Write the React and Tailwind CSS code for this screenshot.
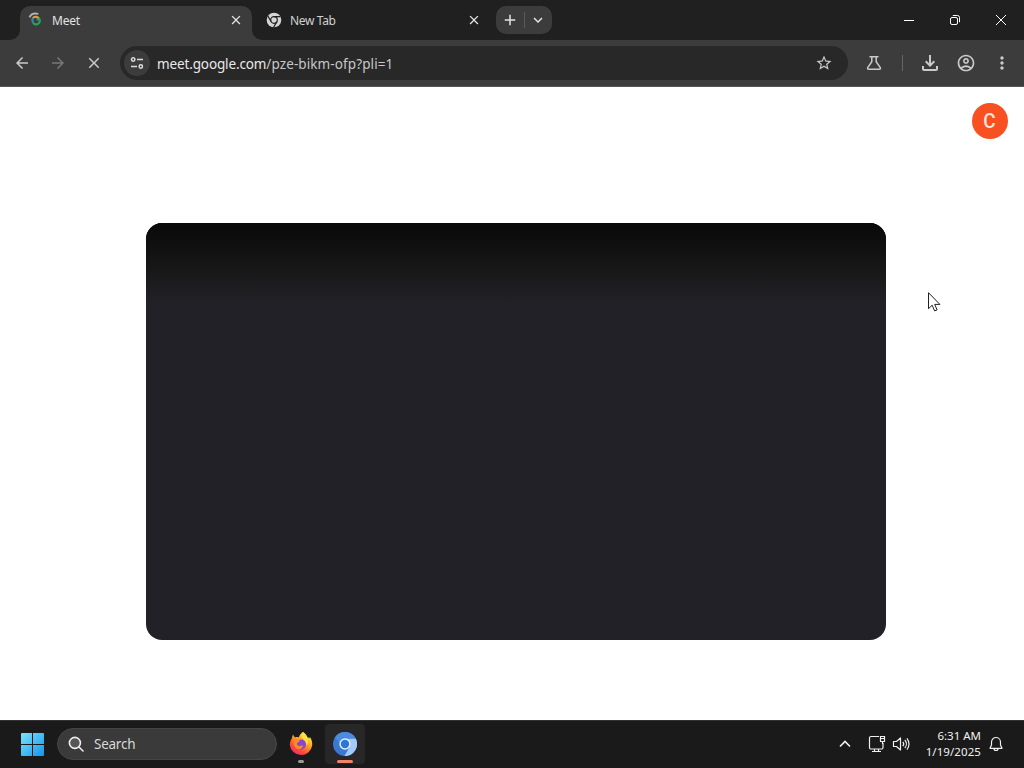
import {
  MdAdd,
  MdArrowBack,
  MdArrowForward,
  MdClose,
  MdKeyboardArrowDown,
  MdMoreVert,
  MdOutlineAccountCircle,
  MdOutlineFileDownload,
  MdStarBorder
} from 'react-icons/md';

const url = { host: 'meet.google.com', path: '/pze-bikm-ofp?pli=1' };

export default function App() {
  return (
    <div className="relative flex h-screen w-screen flex-col overflow-hidden bg-white font-['Noto_Sans','Open_Sans',sans-serif]">
      <TabStrip />
      <Toolbar />
      <MeetPage />
      <Taskbar />
      <Cursor />
    </div>
  );
}

function TabStrip() {
  return (
    <div className="flex h-10 shrink-0 bg-[#202020] pl-5 text-[#e3e3e3]">
      <div className="relative mt-1.5 flex w-[232px] items-center rounded-t-[10px] bg-[#3c3c3c] pr-2 pb-1.5 pl-2">
        <TabFlare className="absolute bottom-0 -left-2.5" />
        <TabFlare className="absolute -right-2.5 bottom-0 -scale-x-100" />
        <LoadingFavicon />
        <span className="mt-px ml-2 flex-1 text-[12px] leading-4 tracking-[-0.25px]">Meet</span>
        <MdClose className="h-4 w-4 p-[0.5px]" />
      </div>
      <div className="mt-1.5 flex w-[238px] items-center pr-2 pb-1.5 pl-3.5">
        <ChromeMono />
        <span className="mt-px ml-2 flex-1 text-[12px] leading-4 tracking-[-0.35px] text-[#d0d0d0]">New Tab</span>
        <MdClose className="h-4 w-4 p-[0.5px]" />
      </div>
      <div className="mt-1.5 ml-1.5 flex h-7 w-14 items-center rounded-[10px] bg-[#3c3c3c]">
        <div className="flex flex-1 justify-center">
          <MdAdd className="h-[18px] w-[18px]" />
        </div>
        <div className="h-4 w-px bg-[#5a5a5a]" />
        <div className="flex flex-1 justify-center">
          <MdKeyboardArrowDown className="h-[18px] w-[18px]" />
        </div>
      </div>
      <div className="ml-auto flex text-white">
        <WindowButton>
          <path d="M1 6.5h10" />
        </WindowButton>
        <WindowButton>
          <rect x="1.5" y="3.5" width="7" height="7" rx="1.5" />
          <path d="M3.8 1.5h4.7a2 2 0 0 1 2 2v4.7" />
        </WindowButton>
        <WindowButton>
          <path d="M1 1l10 10M11 1L1 11" />
        </WindowButton>
      </div>
    </div>
  );
}

function WindowButton({ children }) {
  return (
    <div className="flex w-[46px] items-center justify-center">
      <svg viewBox="0 0 12 12" className="h-3 w-3" fill="none" stroke="currentColor">
        {children}
      </svg>
    </div>
  );
}

function TabFlare({ className }) {
  return (
    <svg viewBox="0 0 10 10" className={`h-2.5 w-2.5 ${className}`}>
      <path d="M10 0v10H0A10 10 0 0 0 10 0z" fill="#3c3c3c" />
    </svg>
  );
}

function Toolbar() {
  return (
    <div className="flex h-[47px] shrink-0 items-center border-b border-[#555] bg-[#3c3c3c] pl-2 text-[#cacaca]">
      <div className="flex gap-2">
        <ToolButton><MdArrowBack className="h-[18px] w-[18px]" /></ToolButton>
        <ToolButton><MdArrowForward className="h-[18px] w-[18px] text-[#777]" /></ToolButton>
        <ToolButton><MdClose className="h-[18px] w-[18px]" /></ToolButton>
      </div>
      <div className="ml-3 flex h-[34px] w-[728px] items-center rounded-full bg-[#282828] pr-[15px] pl-1">
        <div className="flex h-[26px] w-[26px] items-center justify-center rounded-full bg-[#3c3c3c]">
          <svg viewBox="0 0 14 14" className="h-3.5 w-3.5" fill="none" stroke="#dcdcdc" strokeWidth="1.5">
            <circle cx="3.2" cy="3.5" r="1.7" />
            <path d="M7 3.5h6M1 10.5h6" />
            <circle cx="10.8" cy="10.5" r="1.7" />
          </svg>
        </div>
        <p className="mt-px ml-[7px] flex-1 text-[13.5px] leading-5 whitespace-nowrap text-[#c7c7c7]">
          <span className="tracking-[-0.13px] text-[#e8e8e8]">{url.host}</span>
          <span className="tracking-[0.1px]">{url.path}</span>
        </p>
        <MdStarBorder className="h-[18px] w-[18px]" />
      </div>
      <div className="ml-3 flex items-center">
        <ToolButton>
          <svg viewBox="0 0 16 16" className="h-4 w-4" fill="none" stroke="currentColor" strokeWidth="1.5">
            <path d="M3.5 1.700h9M5.800 1.700v5L1.700 12.600a1.100 1.100 0 0 0 .9 1.700h10.800a1.100 1.100 0 0 0 .9-1.700L10.200 6.700v-5" />
          </svg>
        </ToolButton>
        <div className="mx-3.5 h-4 w-px bg-[#656565]" />
        <div className="-ml-px flex gap-2">
          <ToolButton><MdOutlineFileDownload className="h-6 w-6" /></ToolButton>
          <ToolButton><MdOutlineAccountCircle className="h-5 w-5" /></ToolButton>
          <ToolButton><MdMoreVert className="h-5 w-5" /></ToolButton>
        </div>
      </div>
    </div>
  );
}

function ToolButton({ children }) {
  return <div className="flex h-7 w-7 items-center justify-center">{children}</div>;
}

function MeetPage() {
  return (
    <main className="flex min-h-0 flex-1 flex-col bg-white">
      <div className="flex justify-end px-4 pt-4">
        <div className="flex h-9 w-9 items-center justify-center rounded-full bg-[#f85020] font-['Roboto',sans-serif] text-[20px] text-[#ffe4da]">
          <span className="scale-x-95 font-medium">C</span>
        </div>
      </div>
      <div className="mt-[84px] ml-[146px] h-[417px] w-[740px] overflow-hidden rounded-2xl bg-[#222127]">
        <div className="h-[80px] bg-linear-to-b from-[#090909] via-[#181818] via-60% to-[#222127]" />
      </div>
    </main>
  );
}

function Taskbar() {
  return (
    <footer className="flex h-12 shrink-0 items-center border-t border-[#333] bg-[#1a1a1a] pb-px text-[#f0f0f0]">
      <WindowsLogo />
      <div className="ml-[13px] flex h-8 w-[220px] items-center rounded-full border border-[#454545] bg-[#3a3a3a] pl-2.5">
        <svg viewBox="0 0 16 16" className="h-4 w-4" fill="none" stroke="#eee" strokeWidth="1.6">
          <circle cx="6.9" cy="6.9" r="5.5" fill="#555" />
          <path d="M11 11l4 4" strokeLinecap="round" />
        </svg>
        <span className="mt-px ml-[10px] text-[13.5px] tracking-[-0.25px] text-[#d8d8d8]">Search</span>
      </div>
      <div className="ml-1 flex items-center gap-1">
        <div className="flex h-10 w-10 flex-col items-center pt-2">
          <Firefox />
          <div className="mt-1 h-[3px] w-1.5 rounded-full bg-[#9a9a9a]" />
        </div>
        <div className="flex h-10 w-10 flex-col items-center rounded bg-[#272727] pt-2">
          <Chromium />
          <div className="mt-1 h-[3px] w-4 rounded-full bg-[#f4826b]" />
        </div>
      </div>
      <div className="ml-auto flex items-center pr-[21px]">
        <svg viewBox="0 0 12 12" className="h-3 w-3" fill="none" stroke="currentColor" strokeWidth="1.6">
          <path d="M1 8.5l5-5 5 5" />
        </svg>
        <svg viewBox="0 0 18 18" className="ml-[17px] h-[18px] w-[18px]" fill="none" stroke="currentColor" strokeWidth="1.2">
          <path d="M11 1.500H3A1.500 1.500 0 0 0 1.500 3v9.500A1.500 1.500 0 0 0 3 14h10.500a1.500 1.500 0 0 0 1.500-1.500V8" />
          <path d="M6.500 14v2.500M10.500 14v2.500M4 16.500h9M12.500 1.500h4v5h-4zM12.500 3.500h4M14.500 6.500v2.500" />
        </svg>
        <svg viewBox="0 0 18 18" className="ml-1.5 h-[18px] w-[18px]" fill="none" stroke="currentColor" strokeWidth="1.2">
          <path d="M1.500 6.500h3L8.500 3v12l-4-3.500h-3z" strokeLinejoin="round" />
          <path d="M10.800 6.800a3.400 3.400 0 0 1 0 4.400M12.800 5a6 6 0 0 1 0 8M14.900 3.300a8.800 8.800 0 0 1 0 11.400" />
        </svg>
        <div className="ml-3.5 flex w-[57px] flex-col items-end text-[11.5px] leading-4 whitespace-nowrap">
          <p>6:31 AM</p>
          <p className="tracking-[0.08px]">1/19/2025</p>
        </div>
        <svg viewBox="0 0 14 16" className="ml-2 h-4 w-3.5" fill="none" stroke="currentColor" strokeWidth="1.2">
          <path d="M7 1.500a4.500 4.500 0 0 0-4.500 4.500v3L1 12.300h12L11.500 9V6A4.500 4.500 0 0 0 7 1.500z" strokeLinejoin="round" />
          <path d="M5 12.500a2 2 0 0 0 4 0" />
        </svg>
      </div>
    </footer>
  );
}

function WindowsLogo() {
  return (
    <svg viewBox="0 0 23 23" className="ml-[21px] h-[23px] w-[23px]">
      <defs>
        <linearGradient id="win" x1="0" y1="0" x2="23" y2="23" gradientUnits="userSpaceOnUse">
          <stop stopColor="#7be3fa" />
          <stop offset="1" stopColor="#1494ed" />
        </linearGradient>
      </defs>
      <path d="M0 1a1 1 0 0 1 1-1h10v11H0zM12 0h10a1 1 0 0 1 1 1v10H12zM0 12h11v11H1a1 1 0 0 1-1-1zM12 12h11v10a1 1 0 0 1-1 1H12z" fill="url(#win)" />
    </svg>
  );
}

function LoadingFavicon() {
  return (
    <svg viewBox="0 0 16 16" className="h-4 w-4" fill="none">
      <path d="M1.500 5.300C3 2 6.500.8 10.300 1.900" stroke="#aeb4b4" strokeWidth="1.900" />
      <path d="M4.900 6.200A3.600 3.600 0 0 1 11 6.700" stroke="#e5a52e" strokeWidth="2.200" />
      <path d="M4.900 6.200a3.600 3.600 0 0 0 0 4" stroke="#3d80d7" strokeWidth="2.200" />
      <path d="M4.900 10.200A3.600 3.600 0 0 0 11.500 7.300H8.500" stroke="#27a35b" strokeWidth="2.200" />
    </svg>
  );
}

function ChromeMono() {
  return (
    <svg viewBox="0 0 16 16" className="h-4 w-4">
      <circle cx="8" cy="8" r="7.300" fill="#d5d5d5" />
      <g fill="none" stroke="#202020" strokeWidth="1.200">
        <circle cx="8" cy="8" r="3.300" />
        <path d="M8 4.700h6.500M5.140 9.650L1.900 4M10.860 9.650L7.600 15.300" />
      </g>
    </svg>
  );
}

function Firefox() {
  return (
    <svg viewBox="0 0 24 24" className="h-6 w-6">
      <defs>
        <linearGradient id="fox" x1="19" y1="2" x2="5" y2="23" gradientUnits="userSpaceOnUse">
          <stop stopColor="#fff04a" />
          <stop offset=".4" stopColor="#ff9a22" />
          <stop offset=".7" stopColor="#ff4b38" />
          <stop offset="1" stopColor="#e82779" />
        </linearGradient>
      </defs>
      <path d="M14 0c3 2 4 4 4.600 5.500 1-.3 1.400.2 1.800 1 .5-.7.400-1.400.300-2 2 3 2.800 6 2.500 9A11.300 11.300 0 0 1 .8 13c0-3 1-5 2.200-7 .1-1.600.5-2.600 1.200-3.500.4 1.500 1 2.200 2 2.900 1.200-.4 2.400-.4 3.600 0C10.500 3 12 1.200 14 0z" fill="url(#fox)" />
      <circle cx="12" cy="12.500" r="5" fill="#8547d2" />
      <path d="M4.500 8c2.200-1.600 4.700-1.200 6.500.5-.5 1.500-2.300 1.400-3 2.700-.5 1.300.7 2.700 2.500 2.800 1.400 0 2.300-.8 3.600-.1-.7 2.300-3.100 3.600-5.400 3-3-.8-4.800-4.900-4.200-8.900z" fill="#ff8a23" />
      <path d="M14 0c-2 3-1.200 5.500 1 7.500 1.700 1.500 2.700 3.500 2.300 6 2.200-2 2-5 1-7.500C17.500 3.500 16 1.500 14 0z" fill="#ffe23d" />
    </svg>
  );
}

function Chromium() {
  return (
    <svg viewBox="0 0 24 24" className="h-6 w-6">
      <circle cx="12" cy="12" r="12" fill="#3978d3" />
      <path d="M12 6.500h10.700A12 12 0 0 1 11.400 24l5.400-9.300z" fill="#a4caf8" />
      <path d="M1.800 5.700A12 12 0 0 1 22.700 6.500H12a5.500 5.500 0 0 0-5.300 4z" fill="#4c8cdf" />
      <circle cx="12" cy="12" r="5.700" fill="#e2efff" />
      <circle cx="12" cy="12" r="4.200" fill="#2d76d7" />
    </svg>
  );
}

function Cursor() {
  return (
    <svg viewBox="0 0 13 20" className="absolute top-[292px] left-[928px] h-5 w-[13px]">
      <path d="M.5.7v16l3.700-3.500 2.400 5.700 2.500-1-2.400-5.500h5.200z" fill="#fff" stroke="#202020" strokeWidth="1" />
    </svg>
  );
}
